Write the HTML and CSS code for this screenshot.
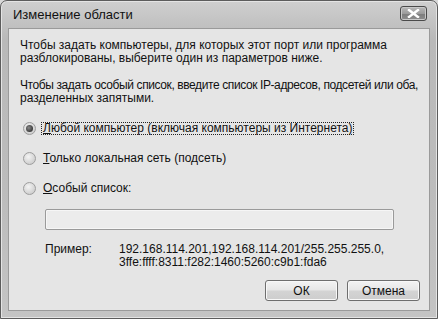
FILE: index.html
```html
<!DOCTYPE html>
<html lang="ru">
<head>
<meta charset="utf-8">
<title>Изменение области</title>
<link rel="stylesheet" href="styles.css">
</head>
<body>
<div class="window">
  <div class="titlebar">
    <span class="title">Изменение области</span>
    <span class="close">
      <svg width="13" height="9" viewBox="0 0 13 9"><path d="M2 1 L11 8 M11 1 L2 8" stroke="#fff" stroke-width="2.4" stroke-linecap="square"/></svg>
    </span>
  </div>
  <div class="client">
    <p class="para">Чтобы задать компьютеры, для которых этот порт или программа<br>разблокированы, выберите один из параметров ниже.</p>
    <p class="para second"><span class="tight">Чтобы задать особый список, введите список IP-адресов, подсетей или оба,</span><br>разделенных запятыми.</p>
    <div class="options">
      <label class="option"><span class="radio checked"></span><span class="label focus"><u>Л</u>юбой компьютер (включая компьютеры из Интернета)</span></label>
      <label class="option"><span class="radio"></span><span class="label"><u>Т</u>олько локальная сеть (подсеть)</span></label>
      <label class="option"><span class="radio"></span><span class="label"><u>О</u>собый список:</span></label>
    </div>
    <div class="field"></div>
    <div class="example">
      <span class="ex-label">Пример:</span>
      <span class="ex-value">192.168.114.201,192.168.114.201/255.255.255.0,<br>3ffe:ffff:8311:f282:1460:5260:c9b1:fda6</span>
    </div>
    <div class="buttons">
      <button class="btn">ОК</button>
      <button class="btn">Отмена</button>
    </div>
  </div>
</div>
</body>
</html>
```
FILE: styles.css
```css
* { box-sizing: border-box; }
html, body { margin: 0; padding: 0; background: #d8d8d8; }
body { font-family: "Liberation Sans", Arial, sans-serif; font-size: 12px; color: #111; }

.window {
  width: 438px;
  height: 319px;
  border: 1px solid #5c5c5c;
  border-radius: 7px 7px 0 0;
  background: linear-gradient(180deg, #cfcfcf 0%, #b9b9b9 12%, #bcbcbc 60%, #c4c4c4 100%);
  display: flex;
  flex-direction: column;
  box-shadow: inset 0 0 0 1px #e4e4e4;
}

.titlebar {
  height: 27px;
  display: flex;
  align-items: center;
  padding: 0 10px 0 12px;
}
.title { font-size: 13px; color: #111; margin-top: -1px; }
.close {
  margin-left: auto;
  margin-top: -2px;
  width: 27px;
  height: 15px;
  border: 1px solid #4a4a4a;
  border-radius: 3px;
  background: linear-gradient(180deg, #b8b8b8 0%, #9c9c9c 50%, #7c7c7c 51%, #8e8e8e 100%);
  display: flex;
  align-items: center;
  justify-content: center;
  box-shadow: inset 0 0 0 1px #c8c8c8;
}

.client {
  flex: 1;
  margin: 0 7px 7px;
  background: #e5e5e5;
  border: 1px solid #9a9a9a;
  padding: 10px 0 0 11px;
  display: flex;
  flex-direction: column;
}

.para { margin: 0; line-height: 13px; white-space: nowrap; }
.para.second { margin-top: 14px; }
.tight { letter-spacing: -0.4px; }

.options { margin-top: 17px; display: flex; flex-direction: column; gap: 17px; padding-left: 3px; }
.option { display: flex; align-items: center; height: 13px; }
.radio {
  width: 13px; height: 13px; border-radius: 50%;
  border: 1px solid #9d9d9d;
  background: radial-gradient(circle at 40% 35%, #f4f4f4 0%, #d6d6d6 60%, #c4c4c4 100%);
  position: relative;
  flex: none;
}
.radio.checked::after {
  content: "";
  position: absolute;
  left: 2px; top: 2px; width: 7px; height: 7px; border-radius: 50%;
  background: radial-gradient(circle at 40% 40%, #8a8a8a 0%, #3a3a3a 70%);
}
.label { margin-left: 5px; padding: 0 1px; line-height: 11px; border: 1px solid transparent; }
.label.focus { border: 1px dotted #222; }
.label u { text-decoration-thickness: 1px; text-underline-offset: 1px; }

.field {
  margin: 14px 0 0 25px;
  width: 349px;
  height: 21px;
  background: #ececec;
  border: 1px solid #9a9a9a;
  border-radius: 2px;
  box-shadow: inset 0 0 0 1px #f6f6f6;
}

.example { display: flex; margin-top: 13px; margin-left: 25px; line-height: 13px; }
.ex-label { width: 74px; flex: none; }

.buttons { margin-top: auto; margin-bottom: 9px; margin-right: 9px; display: flex; justify-content: flex-end; gap: 9px; }
.btn {
  width: 73px; height: 21px;
  font-family: inherit; font-size: 12px; color: #111;
  border: 1px solid #6e6e6e;
  border-radius: 3px;
  background: linear-gradient(180deg, #f3f3f3 0%, #e6e6e6 48%, #d4d4d4 52%, #cdcdcd 100%);
  box-shadow: inset 0 0 0 1px #f8f8f8;
  padding: 0;
}
```
